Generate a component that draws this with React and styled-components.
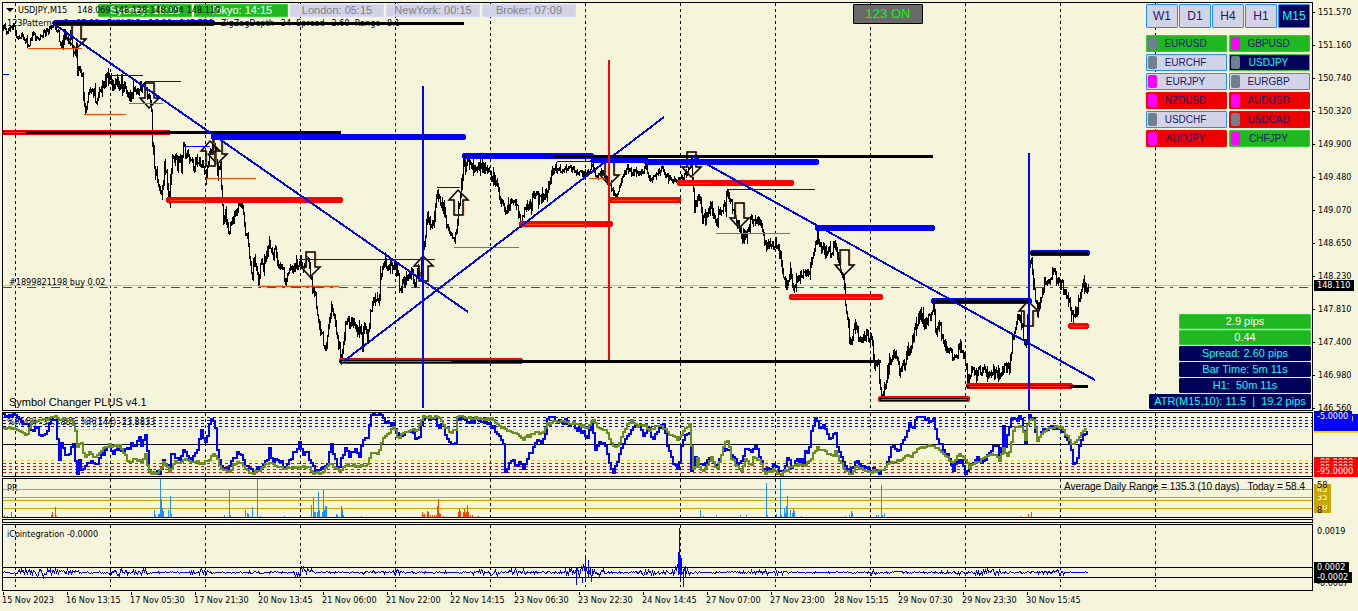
import React from 'react';
import styled, { createGlobalStyle } from 'styled-components';

const GlobalStyle = createGlobalStyle`
  body {
    margin: 0;
    background-color: #f5f5dc;
  }
  * {
    box-sizing: border-box;
  }
`;

const small = '"DejaVu Sans Condensed", "DejaVu Sans", sans-serif';
const arial = '"Liberation Sans", Arial, sans-serif';

const Terminal = styled.main`
  display: grid;
  grid-template-columns: minmax(0, 1fr) 45px;
  grid-template-rows: 409px 65px 40px 4px 67px 20px;
  row-gap: 1px;
  padding: 2px 0 0 2px;
  overflow: hidden;
  color: #000;
  font-family: ${small};
  font-size: 9px;
  line-height: 11px;
`;

/* every child of a panel is a layer on the same grid cell */
const Panel = styled.section`
  display: grid;
  grid-template: minmax(0, 1fr) / minmax(0, 1fr);
  grid-column: 1;
  border: 1px solid #000;
  min-width: 0;
  & > * {
    grid-area: 1 / 1;
  }
`;

const Drawing = styled.svg`
  display: block;
  width: 100%;
  height: 100%;
  shape-rendering: crispEdges;
  fill: none;
`;

const Legend = styled.div`
  padding: ${props => props.$pad || '4px'};
  white-space: pre;
  justify-self: ${props => props.$side || 'start'};
  align-self: ${props => props.$end || 'start'};
  font-family: ${props => (props.$arial ? arial : small)};
  font-size: ${props => props.$size || '9px'};
`;

const TitleRow = styled.div`
  display: flex;
  align-items: center;
  align-self: start;
  justify-self: start;
  gap: 4px;
  padding: 2px 3px;
  white-space: pre;
`;

const Quotes = styled.span`
  display: flex;
  gap: 3px;
  padding-left: 6px;
`;

const MenuButton = styled.button`
  display: flex;
  padding: 0;
  border: 0;
  background: none;
`;

const TopBar = styled.div`
  display: flex;
  align-items: flex-start;
  align-self: start;
  gap: 2px;
  padding: 1px 0 0 95px;
`;

const Clock = styled.button`
  width: 94px;
  height: 13px;
  padding: 0;
  border: 1px solid ${props => (props.$open ? '#32cd32' : '#d8d8ee')};
  border-radius: 1px;
  background-color: ${props => (props.$open ? '#20b820' : '#d3d3e7')};
  color: ${props => (props.$open ? '#fff' : '#808080')};
  font-family: ${arial};
  font-size: 11px;
  line-height: 11px;
`;

const PatternToggle = styled.button`
  width: 70px;
  height: 20px;
  margin-left: 275px;
  padding: 0;
  border: 1px solid #000;
  border-radius: 1px;
  background-color: #696969;
  color: #00ff00;
  font-family: ${arial};
  font-size: 13px;
  line-height: 16px;
`;

const Side = styled.aside`
  display: flex;
  flex-direction: column;
  justify-content: space-between;
  align-items: flex-end;
  justify-self: end;
`;

const Switcher = styled.div`
  display: flex;
  flex-direction: column;
  gap: 7px;
  width: 166px;
  padding: 1px 2px 0 0;
`;

const Frames = styled.div`
  display: grid;
  grid-template-columns: repeat(5, 1fr);
  gap: 1px;
`;

const Pairs = styled.div`
  display: grid;
  grid-template-columns: repeat(2, 1fr);
  gap: 2px;
`;

const Frame = styled.button`
  height: 24px;
  padding: 0;
  border: 1px solid #1e90ff;
  border-radius: 1px;
  background-color: ${props => (props.$active ? '#000058' : '#d3d3e7')};
  color: ${props => (props.$active ? '#00ffff' : '#191970')};
  font-family: ${arial};
  font-size: 12px;
`;

const pairColors = {
  up: ['#20b820', '#32cd32', '#191970'],
  down: ['#ee0000', '#ff0000', '#191970'],
  flat: ['#d3d3e7', '#1e90ff', '#191970'],
  active: ['#000058', '#32cd32', '#00ffff'],
};

const Pair = styled.button`
  display: grid;
  grid-template-columns: 9px 1fr 11px;
  align-items: center;
  height: 17px;
  padding: 0 1px;
  border: 1px solid ${props => pairColors[props.$state][1]};
  border-radius: 1px;
  background-color: ${props => pairColors[props.$state][0]};
  color: ${props => pairColors[props.$state][2]};
  font-family: ${arial};
  font-size: 10px;
  line-height: 13px;
`;

const Marker = styled.i`
  height: 13px;
  border-radius: 2px;
  background-color: ${props => (props.$hot ? '#ff00ff' : '#708090')};
`;

const Stats = styled.div`
  display: flex;
  flex-direction: column;
  align-items: flex-end;
  gap: 1px;
  padding: 0 1px 1px 0;
`;

const Stat = styled.output`
  width: ${props => (props.$wide ? '162px' : '132px')};
  height: 15px;
  border: 1px solid ${props => (props.$good ? '#32cd32' : '#00006a')};
  border-radius: 1px;
  background-color: ${props => (props.$good ? '#20b820' : '#000058')};
  color: ${props => (props.$good ? '#fff' : '#00ffff')};
  font-family: ${arial};
  font-size: 11px;
  line-height: 13px;
  text-align: center;
  white-space: pre;
`;

const Axis = styled.div`
  position: relative;
  grid-column: 2;
`;

const PriceList = styled.div`
  display: flex;
  flex-direction: column;
  gap: 22px;
  padding-top: 5px;
`;

const Price = styled.span`
  display: flex;
  align-items: center;
  gap: 3px;
  &::before {
    content: '';
    width: 2px;
    height: 1px;
    background-color: #000;
  }
`;

const Tag = styled.span`
  position: absolute;
  top: ${props => props.$top}px;
  left: 1px;
  right: ${props => (props.$fill ? '0' : 'auto')};
  height: 11px;
  padding: 0 4px 0 3px;
  line-height: 11px;
  background-color: ${props => props.$bg || 'transparent'};
  color: ${props => props.$color || '#fff'};
`;

const TimeAxis = styled.div`
  display: flex;
  grid-column: 1;
  white-space: nowrap;
`;

const Time = styled.time`
  flex: 0 0 64px;
  &::before {
    content: '';
    display: block;
    width: 1px;
    height: 3px;
    margin-left: 1px;
    background-color: #000;
  }
`;

const BLUE = '#0000ff';
const RED = '#ff0000';
const ORANGE = '#ff4500';
const BLACK = '#000000';

const clocks = [
  ['Sydney: 16:15', true],
  ['Tokyo: 14:15', true],
  ['London: 05:15', false],
  ['NewYork: 00:15', false],
  ['Broker: 07:09', false],
];

const quotes = ['148.069', '148.128', '148.094', '148.110'];

const frames = ['W1', 'D1', 'H4', 'H1', 'M15'];

const pairs = [
  ['EURUSD', 'up', false],
  ['GBPUSD', 'up', true],
  ['EURCHF', 'flat', false],
  ['USDJPY', 'active', false],
  ['EURJPY', 'flat', true],
  ['EURGBP', 'flat', false],
  ['NZDUSD', 'down', true],
  ['AUDUSD', 'down', true],
  ['USDCHF', 'flat', false],
  ['USDCAD', 'down', false],
  ['AUDJPY', 'down', true],
  ['CHFJPY', 'up', true],
];

const prices = ['151.570', '151.160', '150.740', '150.320', '149.900', '149.480', '149.070',
  '148.650', '148.230', '147.810', '147.400', '146.980', '146.560'];

const times = ['15 Nov 2023', '16 Nov 13:15', '17 Nov 05:30', '17 Nov 21:30', '20 Nov 13:45',
  '21 Nov 06:00', '21 Nov 22:00', '22 Nov 14:15', '23 Nov 06:30', '23 Nov 22:30', '24 Nov 14:45',
  '27 Nov 07:00', '27 Nov 23:00', '28 Nov 15:15', '29 Nov 07:30', '29 Nov 23:30', '30 Nov 15:45'];

const gridX = [15, 110, 205, 300, 395, 490, 585, 680, 775, 870, 965, 1060, 1155];

const parse = text => text.trim().split(/\s+/).map(p => p.split(',').map(Number));

const pricePoints = parse(`
3,29 8,31 12,27 15,28 16,38 20,34 24,37 28,46 32,35 38,38 42,34 48,30 52,27 54,23 58,32 60,45 64,35
70,40 74,50 76,52 77,70 80,67 82,80 84,104 86,111 88,92 91,85 94,94 97,100 100,89 104,82 107,76 109,76
113,85 117,82 119,87 121,76 122,90 125,86 129,99 134,92 138,89 142,84 145,88 148,95 151,110 152,140
154,165 158,186 161,195 164,170 166,175 169,198 172,160 175,153 177,167 180,158 181,168 183,147 188,158
193,166 197,162 203,163 206,175 209,155 213,140 215,150 217,175 220,163 222,200 223,222 225,212 229,233
232,220 236,212 238,200 241,202 245,230 248,240 251,277 254,260 258,285 260,265 265,262 269,242 272,258
275,252 278,268 281,262 285,280 288,268 293,266 300,262 302,268 306,258 309,264 312,285 315,296 318,320
322,335 325,350 328,330 331,308 334,320 338,342 341,358 343,338 347,316 349,325 352,320 356,328 360,325
362,345 363,325 367,337 370,315 373,302 376,303 379,295 380,275 383,260 387,265 392,263 397,270 399,290
403,282 406,275 409,280 411,270 414,283 417,270 420,278 422,256 424,240 427,218 430,222 433,222 437,192
439,200 444,208 447,230 450,237 454,240 456,235 457,215 460,195 463,162 465,165 468,162 472,168 476,164
481,168 486,170 491,176 495,180 500,200 506,210 512,202 517,208 521,222 525,205 530,208 534,192 538,198
543,198 547,190 551,172 556,167 561,170 566,168 572,168 578,172 584,174 588,172 592,165 596,177 600,172
605,178 610,185 614,195 618,190 622,178 627,166 633,172 640,172 646,166 649,178 655,175 662,168 667,177
672,180 680,180 686,172 691,160 692,180 694,208 698,196 702,218 706,215 711,208 716,225 719,212 725,205
727,190 731,202 736,220 741,238 746,235 751,218 757,222 762,230 766,247 771,245 776,243 780,257 784,280
787,285 790,270 794,290 799,278 804,270 808,276 812,257 817,233 821,248 827,250 831,255 835,242 839,265
843,278 844,290 846,312 848,328 851,345 855,320 858,335 861,340 866,335 872,340 874,365 878,362 880,393
883,393 886,375 890,357 894,352 899,372 904,362 908,350 912,340 916,325 920,312 924,325 929,318 933,303
936,335 939,325 944,345 949,350 954,360 959,345 964,355 968,380 972,370 976,375 982,368 988,370 994,372
1000,375 1004,365 1009,368 1012,340 1016,320 1020,315 1024,340 1026,345 1029,270 1031,258 1034,290
1037,310 1041,300 1044,282 1048,280 1053,272 1057,280 1062,285 1066,295 1070,305 1073,318 1076,310
1080,290 1083,284 1086,290 1088,284`);

const fastPoints = parse(`
3,415 14,416 20,420 26,424 30,432 36,428 42,438 46,433 50,418 55,420 57,440 59,462 61,443 66,456 69,455
72,441 74,445 75,463 77,473 79,458 82,474 85,464 88,462 92,462 96,467 100,456 104,452 108,447 113,452
117,448 121,452 124,454 126,443 128,453 131,441 134,449 136,444 139,436 141,447 145,433 147,452 149,470
154,473 159,472 163,462 169,470 171,455 176,457 180,458 184,450 189,458 194,457 198,449 200,430 203,437
206,445 208,428 210,417 214,420 217,452 221,466 228,468 232,461 237,454 241,454 245,467 252,472 258,468
263,465 268,457 269,448 272,460 278,458 284,467 289,459 294,453 299,443 303,456 306,448 309,458 314,470
320,472 326,465 328,458 331,446 334,458 338,468 341,460 345,448 349,455 354,449 360,456 362,438 367,440
370,417 376,415 382,416 386,425 394,424 397,435 400,440 406,430 412,431 415,438 420,437 422,418 428,420
434,418 438,427 443,426 446,438 450,444 455,444 457,417 464,420 470,422 476,420 482,422 490,426 496,430
500,440 503,446 505,474 508,463 512,460 516,467 520,464 524,470 528,455 532,450 537,442 542,440 545,433
547,417 554,418 560,423 566,421 572,426 580,430 587,436 592,423 595,452 600,440 605,445 609,465 612,472
616,466 620,450 624,440 630,430 635,425 640,427 643,438 648,423 652,440 658,428 664,425 668,450 672,460
677,470 679,460 680,450 684,437 689,432 691,470 695,458 700,465 706,464 711,458 716,468 720,455 726,450
730,452 735,460 740,465 745,450 750,452 755,446 761,460 764,470 775,466 782,472 787,460 792,467 797,458
803,462 805,453 808,455 811,430 814,425 816,415 819,428 824,427 829,437 832,442 834,428 837,445 843,463
849,473 855,462 862,466 870,470 880,472 887,463 892,445 898,450 902,445 906,433 909,422 913,430 915,418
922,419 930,421 933,420 937,440 943,450 946,456 950,458 953,473 956,460 962,462 966,475 970,465 976,458
982,462 988,455 992,448 997,448 1000,460 1003,428 1005,445 1010,425 1012,416 1018,420 1020,415 1022,425
1025,442 1028,416 1033,420 1037,440 1043,430 1050,427 1056,427 1062,432 1067,438 1071,448 1073,465
1076,463 1079,445 1082,435 1088,432`);

const slowPoints = parse(`
3,429 13,428 20,432 28,436 30,420 36,423 42,418 47,420 53,416 58,420 66,419 72,422 75,430 77,448 80,440
84,457 88,452 94,457 102,449 108,446 113,445 120,447 125,455 128,463 135,458 141,462 145,455 148,472
155,474 160,470 163,463 167,468 170,474 172,463 180,461 187,459 192,463 197,462 202,463 207,462 212,454
216,456 220,468 228,473 234,464 240,461 244,470 251,474 258,470 268,463 276,466 284,469 292,467 300,468
308,467 314,474 322,472 330,464 334,466 340,472 344,465 352,465 360,467 367,463 371,454 378,452 382,440
388,432 394,427 398,438 404,432 412,430 418,430 422,416 430,418 436,415 440,421 446,428 450,432 455,430
457,417 468,417 480,418 490,419 496,422 502,428 508,432 516,433 522,440 528,436 534,432 542,434 547,424
556,421 566,423 578,424 586,428 592,420 598,427 606,431 612,445 616,448 620,440 625,428 631,420 637,426
644,424 648,432 654,427 661,425 666,432 672,436 678,440 680,436 685,428 690,425 692,465 694,474 697,458
700,472 706,468 711,456 716,470 720,457 725,443 728,442 731,460 737,465 741,472 746,457 750,468 753,456
759,460 765,474 772,470 780,474 788,469 796,464 804,466 811,458 816,448 824,452 834,456 835,450 840,462
845,472 850,474 856,467 864,470 874,472 884,470 888,462 896,462 904,457 912,455 918,447 926,446 933,445
938,450 945,457 952,462 958,455 964,458 969,467 976,462 984,458 990,455 996,455 999,462 1003,447
1006,458 1010,450 1013,430 1018,425 1022,428 1025,440 1028,418 1034,422 1037,440 1042,432 1050,427
1060,427 1066,435 1071,444 1077,440 1082,430 1088,430`);

// x, amplitude of the cointegration wave
const wavePoints = parse(`
3,1 12,1 22,4 28,3 34,6 40,5 48,7 52,4 60,2 64,4 72,4 76,5 80,1 105,1 115,4 124,4 132,2 146,4 152,1
190,1 198,4 204,4 212,1 285,1 294,4 302,6 308,4 316,1 355,1 365,2 390,1 395,5 402,1 470,1 480,3 488,6
496,4 505,1 515,4 522,3 540,1 560,2 570,5 576,8 583,8 588,12 594,6 602,3 612,1 635,2 640,5 645,4 655,2
668,3 673,6 677,10 684,14 687,4 692,2 700,1 760,2 775,2 779,4 786,1 865,1 872,5 878,1 905,2 915,1 975,2
984,5 992,5 1002,2 1010,1 1052,2 1058,4 1066,1 1087,1`);

// x1, x2, y, width, colour
const levels = [
  [56, 212, 23, 6, BLUE], [54, 463, 23, 3, BLACK],
  [3, 168, 132, 5, RED], [3, 340, 132, 3, BLACK], [3, 26, 132, 1, ORANGE],
  [214, 463, 137, 6, BLUE],
  [169, 340, 200, 6, RED], [170, 203, 200, 1, ORANGE],
  [465, 591, 156, 6, BLUE], [465, 555, 156, 3, BLACK], [465, 555, 156, 1, BLUE],
  [555, 932, 156, 3, BLACK],
  [593, 646, 160, 5, BLUE], [647, 816, 162, 6, BLUE],
  [612, 678, 200, 6, RED], [612, 678, 200, 1, ORANGE],
  [522, 610, 224, 6, RED], [522, 585, 224, 1, ORANGE],
  [342, 520, 361, 6, RED], [341, 880, 361, 3, BLACK], [342, 451, 361, 1, ORANGE],
  [680, 791, 183, 6, RED], [680, 713, 183, 1, ORANGE],
  [818, 932, 228, 6, BLUE],
  [792, 880, 297, 6, RED], [792, 880, 297, 1, ORANGE],
  [934, 1029, 301, 6, BLUE], [934, 1029, 301, 3, BLACK],
  [881, 967, 399, 6, RED], [881, 967, 399, 3, BLACK], [881, 967, 399, 1, ORANGE],
  [969, 1070, 386, 6, RED], [968, 1087, 386, 3, BLACK], [969, 1070, 386, 1, ORANGE],
  [1033, 1087, 253, 6, BLUE], [1031, 1087, 253, 3, BLACK],
  [1071, 1086, 326, 6, RED], [1071, 1086, 326, 1, ORANGE],
  [3, 9, 74, 1, BLUE], [109, 143, 75, 1, BLUE], [145, 181, 81, 1, BLUE], [183, 210, 146, 1, BLUE],
  [299, 435, 259, 1, BLUE], [437, 460, 187, 1, BLUE], [557, 591, 161, 1, BLUE],
  [727, 815, 189, 1, BLUE],
  [28, 82, 48, 1, ORANGE], [84, 126, 114, 1, ORANGE], [129, 163, 103, 1, ORANGE],
  [206, 256, 178, 1, ORANGE], [259, 339, 286, 1, ORANGE], [454, 519, 247, 1, ORANGE],
  [589, 605, 178, 1, ORANGE], [716, 790, 233, 1, ORANGE],
];

const downArrows = [[76, 50], [149, 109], [217, 165], [310, 278], [609, 186], [691, 178], [739, 229], [844, 276]];
const upArrows = [[210, 141], [423, 256], [458, 190], [1028, 301]];

// x, top
const blueBars = parse(`
154,510 155,515 158,514 159,514 160,479 161,499 162,508 163,511 168,510 170,496 171,514 224,515 229,490
230,515 245,510 247,513 248,514 252,507 257,479 260,516 284,516 311,505 313,498 314,512 315,512 317,512
318,492 319,510 322,512 323,490 324,510 325,506 326,506 336,514 337,515 341,506 342,509 343,515 361,516
700,510 703,516 716,515 740,515 746,515 766,483 767,515 776,514 780,479 781,515 784,508 785,513 786,506
787,496 790,510 792,513 793,509 794,511 801,516 845,516 849,515 851,511 852,513 876,515 878,515 881,485
882,515 884,513`);
const redBars = parse(`
4,515 7,516 11,512 51,515 52,512 55,507 56,516 422,512 423,515 424,514 427,511 428,512 430,515 432,515
434,515 436,515 437,506 438,499 439,513 440,514 443,516 458,512 459,509 460,511 463,512 464,509 465,513
466,512 467,505 468,512 470,515 472,515 478,516 1020,516 1028,514 1031,512`);

const fastLabels = ['-20.0000', '-15.0000', '-10.0000', '-5.0000'];
const lowLabels = ['-80.0000', '-85.0000', '-90.0000', '-95.0000'];

function random(seed) {
  let s = seed;
  return () => {
    s = (s * 16807) % 2147483647;
    return s / 2147483647 - 0.5;
  };
}

function valueAt(points, x) {
  let i = 1;
  while (i < points.length - 1 && points[i][0] < x) i += 1;
  const [x0, y0] = points[i - 1];
  const [x1, y1] = points[i];
  return y0 + ((y1 - y0) * (x - x0)) / (x1 - x0);
}

// one high-low bar for each column, joined to the previous one
function barsPath(points) {
  const next = random(77);
  let last = points[0][1];
  let d = '';
  for (let x = 3; x <= 1088; x += 1) {
    const quiet = x < 60 || (x > 550 && x < 692);
    const mid = valueAt(points, x);
    const close = mid + next() * (quiet ? 6 : 10);
    const wick = next() > 0.25 ? 8 : 3;
    const low = Math.max(last, close) + Math.abs(next()) * wick * (quiet ? 1 : 2);
    const high = Math.min(last, close) - Math.abs(next()) * wick * (quiet ? 1 : 2);
    d += `M${x + 0.5} ${Math.round(high)}V${Math.round(low) + 1}`;
    last = close;
  }
  return d;
}

function stepPath(points, seed, amount) {
  const next = random(seed);
  let d = '';
  for (let x = 3; x <= 1088; x += 2) {
    const y = Math.min(475, Math.max(414, Math.round(valueAt(points, x) + next() * amount)));
    d += d ? `H${x}V${y}` : `M${x} ${y}`;
  }
  return d;
}

function wavePath() {
  const next = random(19);
  let d = 'M3 572.5';
  for (let x = 4; x <= 1087; x += 1) {
    const amp = valueAt(wavePoints, x);
    const y = amp < 1.2
      ? 572 + Math.round(next() * 1.3)
      : 572 + Math.round(next() * 2 * amp * (x % 2 ? 1 : 0.6));
    d += `L${x + 0.5} ${y + 0.5}`;
  }
  return d;
}

const Grid = ({ top, bottom }) => (
  <path
    d={gridX.map(x => `M${x + 0.5} ${top}V${bottom}`).join('')}
    stroke={BLACK}
    strokeDasharray="3 3"
  />
);

const Level = ({ row }) => {
  const [x1, x2, y, width, color] = row;
  const cy = width % 2 ? y + 0.5 : y;
  return (
    <line
      x1={x1}
      x2={x2}
      y1={cy}
      y2={cy}
      stroke={color}
      strokeWidth={width}
      strokeLinecap={width > 1 ? 'round' : 'butt'}
    />
  );
};

const Arrow = ({ x, y, up }) => (
  <g transform={`translate(${x} ${y}) scale(1 ${up ? -1 : 1})`} shapeRendering="auto">
    <path d="M-4 -26H5V-11H10L0 -1L-9 -11H-4Z" stroke="#f4a460" strokeWidth="1" transform="translate(1 0)" />
    <path d="M-4 -26H5V-11H10L0 -1L-9 -11H-4Z" stroke={BLACK} strokeWidth="1.5" />
  </g>
);

const PriceDrawing = () => (
  <Drawing viewBox="3 3 1309 407" preserveAspectRatio="none" aria-label="USDJPY M15 price">
    <Grid top={3} bottom={410} />
    <path d="M3 285.5H1312" stroke="#c0c0c0" />
    <path d="M3 287.5H1312" stroke="#008000" strokeDasharray="9 6 3 6" />
    <path d={barsPath(pricePoints)} stroke={BLACK} />
    {downArrows.map(([x, y]) => <Arrow key={x} x={x} y={y} />)}
    {upArrows.map(([x, y]) => <Arrow key={x} x={x} y={y - 1} up />)}
    {levels.map((row, i) => <Level key={i} row={row} />)}
    <path d="M54 24L468 312M344 361L664 117M692 156L1095 380" stroke={BLUE} strokeWidth="2" />
    <path d="M423 86V408M1029 153V410" stroke={BLUE} strokeWidth="2" />
    <path d="M609 60V360" stroke={RED} strokeWidth="2" />
  </Drawing>
);

const RangeDrawing = () => (
  <Drawing viewBox="3 413 1309 63" preserveAspectRatio="none" aria-label="Percent range">
    <Grid top={413} bottom={476} />
    <path d="M3 417.5H1312M3 420.5H1312M3 423.5H1312M3 426.5H1312" stroke={BLUE} strokeDasharray="3 3" />
    <path d="M3 429.5H1312M3 460.5H1312" stroke="#ffd700" strokeDasharray="3 3" />
    <path d="M3 463.5H1312M3 466.5H1312M3 469.5H1312M3 472.5H1312" stroke={RED} strokeDasharray="3 3" />
    <path d="M3 444.5H1312" stroke={BLACK} />
    <path d={stepPath(fastPoints, 5, 5)} stroke={BLUE} strokeWidth="2" />
    <path d={stepPath(slowPoints, 11, 3)} stroke="#6b8e23" strokeWidth="2" />
  </Drawing>
);

const PrDrawing = () => (
  <Drawing viewBox="3 479 1309 38" preserveAspectRatio="none" aria-label="PR">
    <Grid top={479} bottom={517} />
    <path d="M3 489.5H1312M3 497.5H1312M3 500.5H1312M3 508.5H1312" stroke="#c8a800" />
    <path d={blueBars.map(([x, y]) => `M${x + 0.5} 517V${y}`).join('')} stroke="#1e90ff" />
    <path d={redBars.map(([x, y]) => `M${x + 0.5} 517V${y}`).join('')} stroke={ORANGE} />
  </Drawing>
);

const WaveDrawing = () => (
  <Drawing viewBox="3 525 1309 65" preserveAspectRatio="none" aria-label="Cointegration">
    <Grid top={525} bottom={587} />
    <path d="M3 567.5H1312M3 577.5H1312" stroke={BLACK} />
    <path d={wavePath()} stroke={BLUE} />
    <path d="M576.5 567V585M582.5 577V583M585.5 558V580M588.5 560V578M678.5 552V575M679.5 528V574M680.5 555V580M681.5 558V575M683.5 570V587M685.5 566V578" stroke={BLUE} />
  </Drawing>
);

const App = () => {
  return (
    <>
      <GlobalStyle />
      <Terminal>
        <Panel>
          <Legend $pad="15px 4px">{'123Patterns v6   07:08   BUY SL2   16:00   147.756   ZigZagDepth=24  Spread=2.60  Range=8.1'}</Legend>
          <PriceDrawing />
          <TopBar>
            {clocks.map(([label, open]) => <Clock key={label} $open={open}>{label}</Clock>)}
            <PatternToggle>123 ON</PatternToggle>
          </TopBar>
          <TitleRow>
            <MenuButton aria-label="Chart menu">
              <svg width="8" height="5"><path d="M0 0H8L4 4Z" /></svg>
            </MenuButton>
            <span>USDJPY,M15</span>
            <Quotes>
              {quotes.map(quote => <span key={quote}>{quote}</span>)}
            </Quotes>
          </TitleRow>
          <Legend $pad="274px 6px">#1899821198 buy 0.02</Legend>
          <Legend $arial $size="11px" $end="end" $pad="2px 6px">Symbol Changer PLUS v4.1</Legend>
          <Side>
            <Switcher>
              <Frames>
                {frames.map(name => <Frame key={name} $active={name === 'M15'}>{name}</Frame>)}
              </Frames>
              <Pairs>
                {pairs.map(([name, state, hot]) => (
                  <Pair key={name} $state={state}>
                    <Marker $hot={hot} />
                    {name}
                  </Pair>
                ))}
              </Pairs>
            </Switcher>
            <Stats>
              <Stat $good>2.9 pips</Stat>
              <Stat $good>0.44</Stat>
              <Stat>Spread: 2.60 pips</Stat>
              <Stat>Bar Time: 5m 11s</Stat>
              <Stat>{'H1:  50m 11s'}</Stat>
              <Stat $wide>{'ATR(M15,10): 11.5  |  19.2 pips'}</Stat>
            </Stats>
          </Side>
        </Panel>
        <Axis>
          <PriceList>
            {prices.map(price => <Price key={price}>{price}</Price>)}
          </PriceList>
          <Tag $top={278} $bg="#000">148.110</Tag>
        </Axis>

        <Panel>
          <Legend>{'%R(48) -35.7885  %R(144) -23.8833'}</Legend>
          <RangeDrawing />
        </Panel>
        <Axis>
          <Tag $fill $top={10} $bg="#ffd700">-25.0000</Tag>
          {fastLabels.map((label, i) => (
            <Tag key={label} $fill={label !== '-5.0000'} $top={8 - i * 3} $bg={BLUE}>{label}</Tag>
          ))}
          {lowLabels.map((label, i) => <Tag key={label} $fill $top={45 + i * 3} $bg={RED}>{label}</Tag>)}
        </Axis>

        <Panel>
          <Legend>PR</Legend>
          <PrDrawing />
          <Legend $arial $side="end" $size="10px" $pad="2px 7px">{'Average Daily Range = 135.3 (10 days)   Today = 58.4'}</Legend>
        </Panel>
        <Axis>
          <Tag $top={24} $bg="#c8a800">10</Tag>
          <Tag $top={16} $bg="#c8a800">30</Tag>
          <Tag $top={14} $bg="#c8a800">35</Tag>
          <Tag $top={6} $bg="#c8a800">45</Tag>
          <Tag $top={2} $color="#000">58</Tag>
          <Tag $top={27} $color="#000">8</Tag>
        </Axis>

        <Panel />
        <Axis />

        <Panel>
          <Legend>iCointegration -0.0000</Legend>
          <WaveDrawing />
        </Panel>
        <Axis>
          <Tag $top={2} $color="#000">0.0019</Tag>
          <Tag $top={54} $color="#000">-0.0007</Tag>
          <Tag $top={38} $bg="#000">0.0002</Tag>
          <Tag $top={48} $bg="#000">-0.0002</Tag>
        </Axis>

        <TimeAxis>
          {times.map(time => <Time key={time}>{time}</Time>)}
        </TimeAxis>
      </Terminal>
    </>
  );
};

export default App;
